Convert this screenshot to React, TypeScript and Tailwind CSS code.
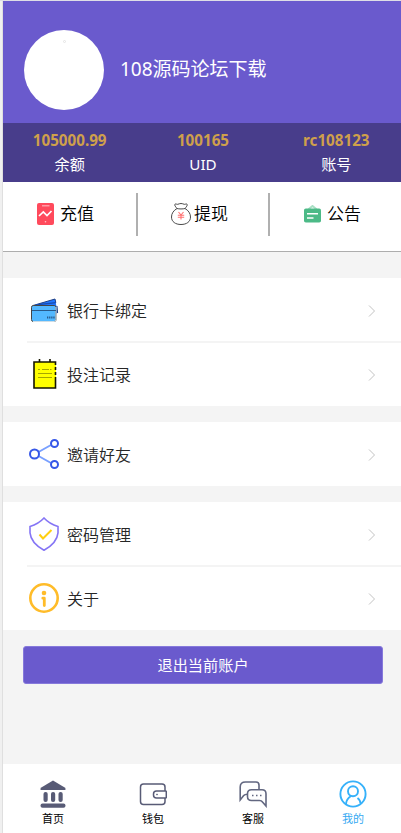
import type { ReactNode } from "react";

const stats = [
  { value: "105000.99", label: "余额" },
  { value: "100165", label: "UID" },
  { value: "rc108123", label: "账号" },
];

function RechargeIcon() {
  return (
    <svg width="17" height="22" viewBox="0 0 17 22" fill="none">
      <rect width="17" height="22" rx="2" fill="#ff4a5c" />
      <path d="M5 2.8h7.5" stroke="#ffb0b8" strokeWidth="1.2" />
      <path d="M2 13l4.3-4 3.7 3.6L14.5 8" stroke="#fff" strokeWidth="1.7" />
      <circle cx="8.5" cy="18.7" r="0.8" fill="#ffc4ca" />
    </svg>
  );
}

function WithdrawIcon() {
  return (
    <svg width="20" height="22" viewBox="0 0 20 22" fill="none">
      <path
        d="M6 5.5C4.8 4 3.2 2.2 3.9 1.3c.7-.9 2 .3 2.9 0S8.7.5 10 .5s2.300.5 3.200.8 2.200-.9 2.900 0c.7.9-.9 2.700-2.100 4.200M6 5.500C2.500 7.500.5 10.500.5 14c0 4.800 4 7.500 9.500 7.500s9.500-2.700 9.500-7.500c0-3.500-2-6.500-5.500-8.500M6 5.500c2 .6 6 .6 8 0"
        stroke="#4a4a4a"
        strokeWidth="1"
      />
      <path d="M7.5 9L10 12l2.500-3M6.800 12.200h6.400M6.800 14.300h6.400M10 12v4.500" stroke="#ff7070" strokeWidth="1.100" />
    </svg>
  );
}

function NoticeIcon() {
  return (
    <svg width="17" height="18" viewBox="0 0 17 18" fill="none">
      <path d="M4.5 4.2L8.500 1l4 3.200" stroke="#a8dfc4" strokeWidth="2" />
      <rect y="3.500" width="17" height="14" rx="1.800" fill="#4cba87" />
      <path d="M3 8.700h11M3 13h6.500" stroke="#fff" strokeWidth="1.400" />
    </svg>
  );
}

function CardIcon() {
  return (
    <svg width="30" height="30" viewBox="0 0 30 30" fill="none">
      <path d="M4 10.500L26 4l1.300 6.500 1.200 7.500-2 1" fill="#2176ff" />
      <path d="M4 10.500L26 4l.8 3.500M28 11l.6 7" stroke="#1d3f86" strokeWidth="1" />
      <path d="M7 9.900l20-2.200" stroke="#174bb0" strokeWidth="1.200" />
      <rect x="2.500" y="10.500" width="24.500" height="16" rx="1.800" fill="#53b8ff" stroke="#444" strokeWidth="1" />
      <path d="M4 26.500h21q2 0 2-2V12" stroke="#cfdde5" strokeWidth="1" />
      <path d="M3 15.500h24" stroke="#28598a" strokeWidth="1" />
      <path d="M18 22.500h8" stroke="#28598a" strokeWidth="2" strokeDasharray="1.300 .8" />
    </svg>
  );
}

function RecordIcon() {
  return (
    <svg width="30" height="32" viewBox="0 0 30 32" fill="none">
      <rect x="5" y="4" width="22" height="26" fill="#ff0" />
      <path d="M26.500 7V4H5v26h21.500V19M26.500 9v3M26.500 14v3" stroke="#151500" strokeWidth="1.600" />
      <path d="M10.500 1v3M21 1v3" stroke="#151500" strokeWidth="1.600" />
      <path d="M9 11.500h2M13 11.500h7M21 11.500h1.500M9 15.500h14M9 19.500h14" stroke="#a6a600" strokeWidth="1" />
    </svg>
  );
}

function ShareIcon() {
  return (
    <svg width="30" height="30" viewBox="0 0 30 30" fill="none" strokeWidth="2">
      <path d="M9.500 13L22 6M9.500 17L22 24" stroke="#79a0ff" />
      <circle cx="5.500" cy="15" r="4.500" stroke="#3657e8" />
      <circle cx="25.500" cy="4.500" r="3.500" stroke="#3657e8" />
      <circle cx="25.500" cy="25.500" r="3.500" stroke="#3657e8" />
    </svg>
  );
}

function ShieldIcon() {
  return (
    <svg width="30" height="34" viewBox="0 0 30 34" fill="none">
      <path
        d="M15 1q5.500 6 14 8.500v6.300Q28 26 15 33.200 2 26 1 15.800V9.500Q9.500 7 15 1z"
        stroke="#8575f5"
        strokeWidth="1.600"
      />
      <path d="M10.500 17.500l3.500 4L22.500 13" stroke="#ffcf10" strokeWidth="2" />
    </svg>
  );
}

function InfoIcon() {
  return (
    <svg width="30" height="30" viewBox="0 0 30 30" fill="none">
      <circle cx="15" cy="15" r="13.700" stroke="#ffbc29" strokeWidth="2.600" />
      <circle cx="15" cy="10" r="2.300" fill="#ffbc29" />
      <path d="M13.800 15.200h1.500v7.300" stroke="#ffbc29" strokeWidth="2.800" strokeLinecap="round" strokeLinejoin="round" />
    </svg>
  );
}

function HomeIcon() {
  return (
    <svg width="28" height="28" viewBox="0 0 28 28" fill="#585b76">
      <path d="M14 .5L25.700 7.500q1.300.9.700 2.500H1.600Q1 8.400 2.300 7.500z" />
      <rect x="4.500" y="12" width="4.200" height="10" rx="2" />
      <rect x="12" y="12" width="4.200" height="10" rx="2" />
      <rect x="19.500" y="12" width="4.200" height="10" rx="2" />
      <rect x="1.500" y="23.500" width="25" height="4.200" rx="2" />
    </svg>
  );
}

function WalletIcon() {
  return (
    <svg width="28" height="28" viewBox="0 0 28 28" fill="none" stroke="#585b76" strokeWidth="1.500">
      <path d="M26 11V7q0-3-3-3H4.500q-3 0-3 3v14.500q0 3 3 3H23q3 0 3-3V18" />
      <path d="M26.500 11h-9q-3 0-3 3v1q0 3 3 3h9q.8 0 .8-.8v-5.400q0-.8-.8-.8z" />
      <circle cx="18" cy="14.500" r=".5" strokeWidth="1" />
    </svg>
  );
}

function ServiceIcon() {
  return (
    <svg width="28" height="28" viewBox="0 0 28 28" fill="none" stroke="#626780" strokeWidth="1.600">
      <path d="M20 9V5q0-3-3-3H6.500q-5.300 0-5.300 5v13l3.500-4.500q1-1.300 3.800-1.300" />
      <path d="M12.500 9.700H23q4 0 4 4V26l-3.500-4q-1-1.500-3-1.500h-8q-4 0-4-4v-2.800q0-4 4-4z" />
      <path d="M13 15.500h1.500M17 15.500h1.500M21 15.500h1.500" />
    </svg>
  );
}

function MineIcon() {
  return (
    <svg width="28" height="28" viewBox="0 0 28 28" fill="none" stroke="#35b1fa" strokeWidth="1.900">
      <circle cx="14" cy="14" r="12.600" />
      <circle cx="14" cy="11.300" r="5" />
      <path d="M7 24q.3-5 5-8M18.500 18q2.800 2 3 5.500" />
    </svg>
  );
}

function Chevron() {
  return (
    <svg className="mt-px" width="8" height="12" viewBox="0 0 8 12" fill="none">
      <path d="M1 .5L6.500 6 1 11.500" stroke="#c2c2c2" strokeWidth="1" />
    </svg>
  );
}

function Row({ icon, title }: { icon: ReactNode; title: string }) {
  return (
    <div className="flex h-16 items-center pr-[27px] pl-[26px]">
      <div className="flex w-[30px] justify-center">{icon}</div>
      <span className="ml-2 flex-1 pt-0.5 text-base leading-6 font-[350] text-[#262626]">{title}</span>
      <Chevron />
    </div>
  );
}

function Divider() {
  return <div className="-my-px ml-6 h-0.5 bg-[#f4f4f4]" />;
}

const tabs = [
  { icon: <HomeIcon />, label: "首页" },
  { icon: <WalletIcon />, label: "钱包" },
  { icon: <ServiceIcon />, label: "客服" },
  { icon: <MineIcon />, label: "我的", active: true },
];

export default function App() {
  return (
    <div className="h-[833px] w-[401px] overflow-hidden border-t border-[#dedee6] bg-[#f0f0f0] pl-0.5 font-['Noto_Sans','Noto_Sans_CJK_SC',sans-serif]">
      <div className="flex h-full w-[401px] flex-col border-l border-[#dfdfdf] bg-[#f4f4f4]">
        <header className="flex h-[122px] items-center bg-[#6a5acd] pt-[15px] pl-[21px]">
          <div className="flex size-20 justify-center rounded-full bg-white pt-2.5">
            <span className="h-[3px] w-[3px] rounded-xs border border-[#e4e4e4]" />
          </div>
          <h1 className="ml-4 text-[19px] text-white">108源码论坛下载</h1>
        </header>

        <section className="grid h-[59px] grid-cols-3 bg-[#483d8b] pt-[5px] text-center text-[15.2px] leading-6">
          {stats.map((s) => (
            <div key={s.label}>
              <div className="font-bold text-[#cfa04b]">{s.value}</div>
              <div className="text-white">{s.label}</div>
            </div>
          ))}
        </section>

        <section className="flex h-[70px] items-start border-b border-[#adadad] bg-white pt-[11px] text-[17px] leading-10 font-[350] text-black">
          <div className="flex h-[43px] w-[135px] items-center border-r-2 border-[#b0b0b0] pb-0.5 pl-[34px]">
            <RechargeIcon />
            <span className="ml-1.5">充值</span>
          </div>
          <div className="flex h-[43px] w-[132px] items-center border-r-2 border-[#b0b0b0] pb-0.5 pl-[33px]">
            <WithdrawIcon />
            <span className="ml-[3px]">提现</span>
          </div>
          <div className="flex h-[43px] items-center pb-0.5 pl-[34px]">
            <NoticeIcon />
            <span className="ml-1.5">公告</span>
          </div>
        </section>

        <section className="mt-[26px] bg-white">
          <Row icon={<CardIcon />} title="银行卡绑定" />
          <Divider />
          <Row icon={<RecordIcon />} title="投注记录" />
        </section>

        <section className="mt-4 bg-white">
          <Row icon={<ShareIcon />} title="邀请好友" />
        </section>

        <section className="mt-4 bg-white">
          <Row icon={<ShieldIcon />} title="密码管理" />
          <Divider />
          <Row icon={<InfoIcon />} title="关于" />
        </section>

        <button className="mt-4 mr-5 ml-5 h-[38px] shrink-0 rounded-[3px] border border-[#8679db] bg-[#6a5acd] text-[15.2px] text-white">
          退出当前账户
        </button>

        <nav className="mt-auto grid h-[69px] grid-cols-4 bg-white pt-4">
          {tabs.map((t) => (
            <div key={t.label} className="flex flex-col items-center">
              {t.icon}
              <span className={`mt-0.5 text-[11px] leading-[18px] ${t.active ? "text-[#35a9f2]" : "text-black"}`}>
                {t.label}
              </span>
            </div>
          ))}
        </nav>
      </div>
    </div>
  );
}
